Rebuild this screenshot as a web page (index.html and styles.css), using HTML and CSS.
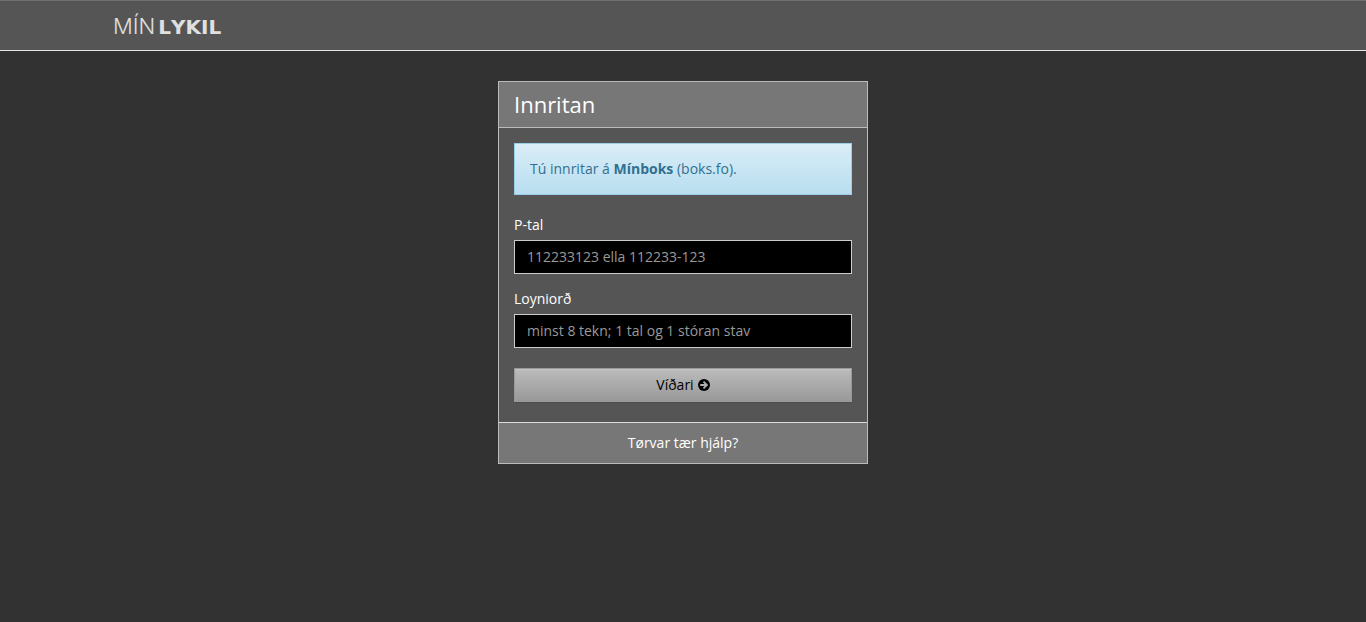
FILE: index.html
```html
<!DOCTYPE html>
<html lang="fo">
<head>
<meta charset="utf-8">
<meta name="viewport" content="width=device-width, initial-scale=1">
<title>Mínlykil</title>
<link rel="stylesheet" href="styles.css">
</head>
<body>
<header class="navbar">
  <div class="container">
    <a class="brand" href="#"><span class="brand-light">MÍN</span><span class="brand-bold">LYKIL</span></a>
  </div>
</header>
<main class="page">
  <section class="panel">
    <div class="panel-heading"><h1 class="panel-title">Innritan</h1></div>
    <form class="panel-body">
      <p class="alert">Tú innritar á <strong>Mínboks</strong> (boks.fo).</p>
      <div class="field">
        <label for="ptal">P-tal</label>
        <input class="control" id="ptal" type="text" placeholder="112233123 ella 112233-123">
      </div>
      <div class="field">
        <label for="password">Loyniorð</label>
        <input class="control" id="password" type="password" placeholder="minst 8 tekn; 1 tal og 1 stóran stav">
      </div>
      <button class="submit" type="button">
        <span>Víðari</span>
        <svg class="arrow" viewBox="0 0 12 12" aria-hidden="true"><circle cx="6" cy="6" r="6" fill="#000"/><path d="M2.2 6h6.4M5.5 2.6 8.9 6 5.5 9.4" fill="none" stroke="#b0b0b0" stroke-width="1.8"/></svg>
      </button>
    </form>
    <footer class="panel-footer"><a class="help" href="#">Tørvar tær hjálp?</a></footer>
  </section>
</main>
</body>
</html>
```
FILE: styles.css
```css
* { box-sizing: border-box; }

body {
  margin: 0;
  min-height: 100vh;
  background: #323232;
  color: #fff;
  font: 14px/20px "Open Sans", "Noto Sans", sans-serif;
}

.navbar {
  background: #555;
  border-top: 1px solid #717171;
  border-bottom: 1px solid #e6e6e6;
}

.container {
  display: flex;
  align-items: center;
  max-width: 1170px;
  height: 49px;
  margin: 0 auto;
  padding: 0 15px;
}

.brand {
  display: flex;
  align-items: baseline;
  gap: 3px;
  padding-top: 2px;
  color: #e0e0e0;
  font-family: "DejaVu Sans", sans-serif;
  font-size: 20px;
  font-kerning: none;
  line-height: 26px;
  text-decoration: none;
}

.brand-light {
  font-family: Inter, "DejaVu Sans", sans-serif;
  font-size: 22px;
  font-weight: 300;
}

.brand-bold { font-weight: 700; }

.page { padding: 30px 15px; }

.panel {
  max-width: 370px;
  margin: 0 auto;
  background: #555;
  border: 1px solid #bbb;
}

.panel-heading {
  padding: 10px 15px;
  background: #777;
  border-bottom: 1px solid #bbb;
}

.panel-title {
  margin: 0;
  font-size: 22px;
  font-weight: 400;
  line-height: 25px;
}

.panel-body { padding: 15px 15px 20px; }

.alert {
  margin: 0 0 20px;
  padding: 15px;
  color: #31708f;
  background: linear-gradient(#d9edf7, #b9def0);
  border: 1px solid #9acfea;
}

.field { margin-bottom: 15px; }

.field label {
  display: block;
  margin-bottom: 5px;
}

.control {
  display: block;
  width: 100%;
  height: 34px;
  padding: 5px 12px 7px;
  color: #fff;
  background: #000;
  border: 1px solid #ccc;
  border-radius: 0;
  font: inherit;
}

.control::placeholder { color: #999; opacity: 1; }

.submit {
  display: flex;
  align-items: center;
  justify-content: center;
  gap: 4px;
  width: 100%;
  height: 34px;
  margin-top: 20px;
  padding: 6px 12px;
  color: #000;
  background: linear-gradient(#bbb, #999);
  border: 1px solid #999;
  border-radius: 0;
  box-shadow: inset 0 1px 0 rgba(255, 255, 255, 0.15), 0 1px 1px rgba(0, 0, 0, 0.075);
  font: inherit;
}

.arrow { width: 12px; height: 12px; }

.panel-footer {
  padding: 10px 15px;
  background: #777;
  border-top: 1px solid #ddd;
  text-align: center;
}

.help { color: #fff; text-decoration: none; }
```
